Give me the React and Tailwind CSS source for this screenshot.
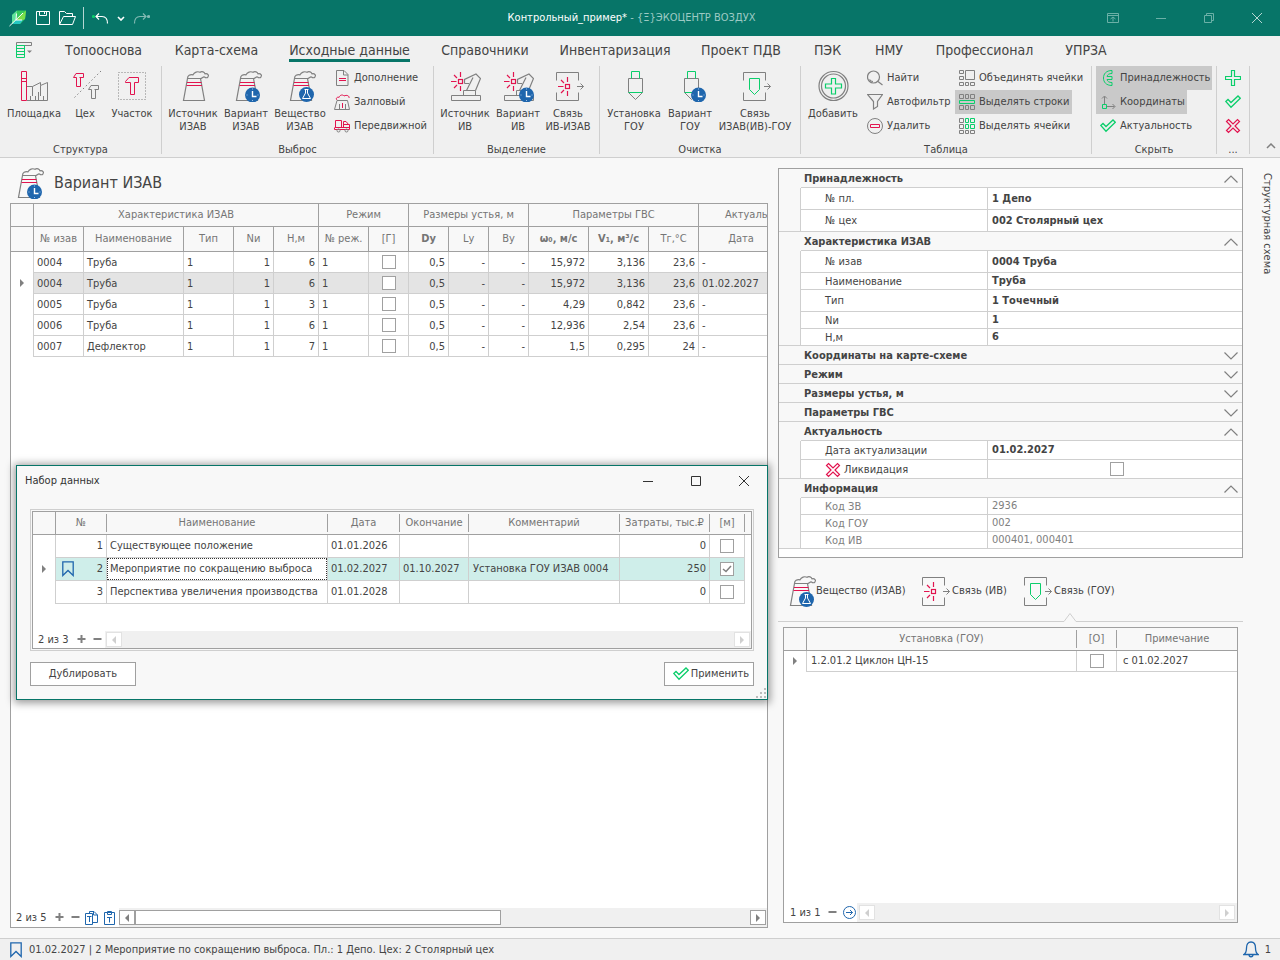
import { useState } from "react";

const GREY = "#808080";
const RED = "#e2144f";
const GREEN = "#0bce6b";
const BLUE = "#1f66ad";

/* ---------- icons ---------- */

const Svg = ({ w = 32, h = 32, children, className = "" }) => (
	<svg
		width={w}
		height={h}
		viewBox={`0 0 ${w} ${h}`}
		fill="none"
		stroke={GREY}
		className={`shrink-0 ${className}`}
		aria-hidden="true"
	>
		{children}
	</svg>
);

const Stack = () => (
	<>
		<path d="M10.5 8.500L6.500 30.500H27.500L23.500 8.500Z" strokeWidth="1.200" />
		<path
			d="M10.5 8.500C10.5 5.500 13 4.300 16 4.800C17.200 2.200 20.500 1 23 2.300C25 .8 27.500 2 28 3.800C31 3.300 32 5.200 31 6.800C30 8.300 28.500 7.800 27.500 7C26 6.500 25 8.500 23.500 8.500"
			strokeWidth="1.200"
		/>
		<path d="M10 12.500H24.500M9.500 15.500H25" stroke={RED} />
	</>
);

const ClockBadge = ({ x = 22.5, y = 25 }) => (
	<g>
		<circle cx={x} cy={y} r="7.500" fill={BLUE} stroke="none" />
		<path d={`M${x} ${y - 4}V${y + 1.5}H${x + 4}`} stroke="#fff" strokeWidth="1.400" />
		<path
			d={`M${x - 6} ${y}h1M${x + 5} ${y}h1M${x} ${y - 6.5}v1M${x} ${y + 5}v1`}
			stroke="#9dc3e8"
		/>
	</g>
);

const StackIcon = () => (
	<Svg>
		<Stack />
	</Svg>
);

const StackClockIcon = () => (
	<Svg>
		<Stack />
		<ClockBadge />
	</Svg>
);

const StackFlaskIcon = () => (
	<Svg>
		<Stack />
		<circle cx="22.5" cy="24.500" r="7.500" fill={BLUE} stroke="none" />
		<path d="M20.500 19.500H24.500M21.500 19.500V23L18.500 28.500H26.500L23.500 23V19.500" stroke="#fff" />
	</Svg>
);

const PlantIcon = () => (
	<Svg>
		<path d="M9 16.500H14.500L22.500 12.500V15.500L29.500 12.500V30.500H9M14.500 16.500V26M22.500 15.500V26M12.500 26V30M17.500 26V30M20.500 22V30M25.500 26V30" />
		<path d="M3.500 1.500H8.500V30.500H3.500ZM3.500 8.500H8.500M3.500 11.500H8.500" stroke={RED} />
	</Svg>
);

const HAMMER = "M.5 4.500L3 .5H10.500V4.500H6.500M.5 4.500H3.500V13.500H7.500V4.500";

const WorkshopIcon = () => (
	<Svg>
		<path d="M5.500 27.500L32 1" strokeDasharray="1.500 2.500" />
		<path d={HAMMER} stroke={RED} transform="translate(4 3)" />
		<path d={HAMMER} transform="translate(19 15)" />
	</Svg>
);

const SectorIcon = () => (
	<Svg>
		<rect x="2.500" y="2.500" width="27" height="27" strokeDasharray="1 2" />
		<path d="M9.500 11.500L13 7.500H22.500V12.500H18.500V24.500H14.500V12.500H9.500Z" stroke={RED} />
	</Svg>
);

const Burst = ({ x, y }) => (
	<g stroke={RED} strokeWidth="1.200" transform={`translate(${x} ${y})`}>
		<rect x="-2" y="-2" width="4" height="4" />
		<path d="M0-9.500V-4.500M0 4.500V9.500M-9.500 0H-4M-6.500-6.500L-3.500-3.500M-6.500 6.500L-3.500 3.500" />
	</g>
);

const EmitterIcon = ({ clock }) => (
	<Svg>
		<path d="M2.500 25.500H31.500V30.500H2.500ZM14.500 25.500V20.500H26.500V25.500" />
		<path
			d="M15.500 13.500V9.500L27 4L31.500 8.500L26.500 20.500M24 7.500L17.500 20.500M15.500 13.500H20"
			strokeWidth="1.200"
		/>
		<Burst x={11.5} y={11.5} />
		{clock && <ClockBadge x={24.5} />}
	</Svg>
);

const Brackets = () => (
	<path d="M4.500 10.500V2.500H26.500V10.500M4.500 22.500V30.500H26.500V22.500M25 16.500H31.500M28.500 13.500L31.500 16.500L28.500 19.500" />
);

const LinkBurstIcon = () => (
	<Svg>
		<Brackets />
		<Burst x={15.5} y={16.5} />
	</Svg>
);

const LinkFilterIcon = () => (
	<Svg>
		<Brackets />
		<path d="M10.500 8.500H20.500V19.500L15.500 24.500L10.500 19.500Z" stroke={GREEN} />
	</Svg>
);

const FilterUnitIcon = ({ clock }) => (
	<Svg>
		<path d="M10.500 22.500V8.500H24.500V22.500L17.500 29.500Z" />
		<path d="M13.500 8.500V1.500H21.500V8.500M10.500 22.500H24.500" stroke={GREEN} />
		{clock && <ClockBadge x={24.5} />}
	</Svg>
);

const AddIcon = () => (
	<Svg>
		<circle cx="16.500" cy="16" r="14.500" strokeWidth="1.200" />
		<circle cx="16.500" cy="16" r="12" strokeWidth="1.200" />
		<path d="M14.500 8.500h4v5.500h6v4h-6v6h-4v-6h-6v-4h6z" stroke={GREEN} strokeWidth="1.200" />
	</Svg>
);

const DocIcon = () => (
	<Svg w={16} h={16}>
		<path d="M2.500 .5H10L14 4.500V15.500H2.500ZM9.500 .5V5H14" />
		<path d="M5 8.500H12M5 10.500H12" stroke={RED} />
	</Svg>
);

const VolleyIcon = () => (
	<Svg w={16} h={16}>
		<path d="M.5 15.500H15.500L13.500 6.500H3L.5 15.500M5.500 10V15M11.500 10V15" />
		<path d="M3 6C1 4 4 2.500 5 3.500C6 .5 9 .5 10 2C13 .5 15.500 2 15 4M8.500 9V14" stroke={RED} />
	</Svg>
);

const TruckIcon = () => (
	<Svg w={16} h={16}>
		<path d="M.5 9.500V11.500H15.500V9M1.500 2.500H7.500V9.500H1.500ZM9.500 9.500V3.500H12L15 7M10 6.500H15.500V9.500H1" stroke={RED} />
		<circle cx="4.500" cy="12.500" r="1.500" />
		<circle cx="12.500" cy="12.500" r="1.500" />
	</Svg>
);

const FindIcon = () => (
	<Svg w={16} h={16}>
		<circle cx="6.500" cy="7" r="6" strokeWidth="1.200" />
		<path d="M11 11.500L15.500 15M2.500 9.500C3 11 4.500 11.500 6 11.500" strokeWidth="1.200" />
	</Svg>
);

const FunnelIcon = () => (
	<Svg w={16} h={16}>
		<path d="M.5 .5H15.500L10.500 7.500V12.500L6.500 15V7.500Z" strokeWidth="1.200" />
	</Svg>
);

const DeleteIcon = () => (
	<Svg w={16} h={16}>
		<circle cx="8" cy="8" r="7.500" />
		<path d="M3.500 6.500H12.500V9.500H3.500Z" stroke={RED} />
	</Svg>
);

const MergeCellsIcon = () => (
	<Svg w={16} h={16}>
		<path d="M.5 .5h4v3h-4zM.5 6.500h4v3h-4zM.5 12.500h4v3h-4zM6.500 12.500h3v3h-3zM11.500 12.500h4v3h-4zM6.500 .5h9v9h-9z" />
	</Svg>
);

const RowCellsIcon = () => (
	<Svg w={16} h={16}>
		<path d="M.5 .5h4v4h-4zM6.500 .5h3v4h-3zM11.500 .5h4v4h-4zM.5 11.500h4v4h-4zM6.500 11.500h3v4h-3zM11.500 11.500h4v4h-4z" />
		<path d="M.5 6.500h15v3h-15z" stroke={GREEN} />
	</Svg>
);

const CellsIcon = () => (
	<Svg w={16} h={16}>
		<path d="M.5 .5h4v4h-4zM.5 6.500h4v4h-4zM.5 12.500h4v3h-4zM6.500 12.500h3v3h-3zM11.500 12.500h4v3h-4z" />
		<path d="M6.500 .5h3v4h-3zM11.500 .5h4v4h-4zM6.500 6.500h3v4h-3zM11.500 6.500h4v4h-4z" stroke={GREEN} />
	</Svg>
);

const BelongIcon = () => (
	<Svg w={16} h={16}>
		<path
			d="M12 .5C6 .5 3.500 4 3.500 8S6 15.500 12 15.500V12.500C9 12.500 7.500 11.500 7 9.500H12V6.500H7C7.500 4.500 9 3.500 12 3.500Z"
			stroke={GREEN}
		/>
	</Svg>
);

const AxesIcon = () => (
	<Svg w={16} h={16}>
		<path d="M4.500 10V2.500M2 4.500L4.500 2L7 4.500M7 12.500H14.500M12.500 10L15 12.500L12.500 15" />
		<path d="M2.500 10.500h4v4h-4z" stroke={GREEN} />
	</Svg>
);

const CheckIcon = () => (
	<Svg w={16} h={16}>
		<path d="M.8 7.500L3 5.500L6 8.500L13 2L15.300 4.200L6 13.200Z" stroke={GREEN} strokeWidth="1.300" />
	</Svg>
);

const PlusIcon = () => (
	<Svg w={16} h={16}>
		<path d="M6.500 .5h3v6h6v3h-6v6h-3v-6h-6v-3h6z" stroke={GREEN} strokeWidth="1.200" />
	</Svg>
);

const CrossIcon = () => (
	<Svg w={16} h={16}>
		<path
			d="M3.500 1.500L8 6L12.500 1.500L14.500 3.500L10 8L14.500 12.500L12.500 14.500L8 10L3.500 14.500L1.500 12.500L6 8L1.500 3.500Z"
			stroke={RED}
			strokeWidth="1.200"
		/>
	</Svg>
);

const BookmarkIcon = () => (
	<Svg w={12} h={16}>
		<path d="M.8 .8H11.200V14.500L6 9.500L.8 14.500Z" stroke={BLUE} strokeWidth="1.300" />
	</Svg>
);

const Chevron = ({ open }) => (
	<Svg w={14} h={8}>
		<path d={open ? "M.5 7.500L7 1L13.500 7.500" : "M.5 .5L7 7L13.500 .5"} strokeWidth="1.200" />
	</Svg>
);

const Marker = () => (
	<svg width="4" height="10" viewBox="0 0 4 10" fill={GREY} className="mx-auto" aria-hidden="true">
		<path d="M0 0L4 4L0 8Z" />
	</svg>
);

/* ---------- small controls ---------- */

const Checkbox = ({ label, defaultChecked = false }) => {
	const [checked, setChecked] = useState(defaultChecked);
	return (
		<label className="mx-auto grid w-[14px] place-items-center">
			<input
				type="checkbox"
				aria-label={label}
				checked={checked}
				onChange={() => setChecked(!checked)}
				className="col-start-1 row-start-1 h-[14px] w-[14px] appearance-none border border-[#a0a0a0] bg-white"
			/>
			{checked && (
				<svg
					width="10"
					height="8"
					viewBox="0 0 10 8"
					fill="none"
					stroke={GREY}
					strokeWidth="1.500"
					className="col-start-1 row-start-1"
				>
					<path d="M1 4L4 6.500L9 1" />
				</svg>
			)}
		</label>
	);
};

const ScrollArrow = ({ left, active }) => (
	<button
		type="button"
		aria-label={left ? "Влево" : "Вправо"}
		className={`grid h-[15px] w-4 shrink-0 place-items-center border bg-white ${
			active ? "border-[#a0a0a0]" : "border-[#e2e2e2]"
		}`}
	>
		<svg width="4" height="8" viewBox="0 0 4 8" fill={active ? GREY : "#cfcfcf"}>
			<path d={left ? "M4 0L0 4L4 8Z" : "M0 0L4 4L0 8Z"} />
		</svg>
	</button>
);

const NavButton = ({ label, plus }) => (
	<button type="button" aria-label={label} className="grid h-4 w-4 shrink-0 place-items-center">
		<svg width="9" height="9" viewBox="0 0 9 9" fill="none" stroke={GREY} strokeWidth="2">
			<path d={plus ? "M.5 4H8.500M4.500 0V8" : "M.5 4H8.500"} />
		</svg>
	</button>
);

const BigButton = ({ icon, lines, className }) => (
	<button type="button" className={`flex h-[68px] flex-col items-center whitespace-nowrap ${className}`}>
		{icon}
		<span className="mt-[5px] flex flex-col leading-[13px]">
			{lines.map((line) => (
				<span key={line}>{line}</span>
			))}
		</span>
	</button>
);

const SmallButton = ({ icon, text, pressed }) => (
	<button
		type="button"
		className={`flex h-6 items-center gap-1 self-start whitespace-nowrap pr-[2px] pl-1 ${
			pressed ? "bg-[#c9c9c9]" : ""
		}`}
	>
		{icon}
		<span>{text}</span>
	</button>
);

const RibbonGroup = ({ title, className, children }) => (
	<section className={`flex h-[88px] shrink-0 flex-col border-r border-[#cfcfcf] ${className}`}>
		<div className="flex h-[77px] shrink-0">{children}</div>
		<h2 className="text-center leading-[14px]">{title}</h2>
	</section>
);

/* ---------- title bar and ribbon ---------- */

const TitleBar = () => (
	<header className="flex h-9 items-center bg-[#077568] text-white">
		<div className="flex flex-1 items-center">
			<svg width="18" height="18" viewBox="0 0 18 18" className="ml-[9px]" aria-hidden="true">
				<path d="M3 6L8 1.500H17L16 10L11 15H3Z" fill="#35c95d" />
				<path d="M3 6L8 1.500L7 11L3 15Z" fill="#5fe39a" />
				<path d="M17 1.500L7 11H14L16 10Z" fill="#7be04a" />
				<path d="M3 15L7 11H14L11 15Z" fill="#25c7c0" />
				<path d="M.5 17L14 4M7.500 4.500L7 11M7 11H13" stroke="#fff" fill="none" />
			</svg>
			<button type="button" aria-label="Сохранить" className="ml-2">
				<svg width="16" height="16" viewBox="0 0 16 16" fill="none" stroke="#fff">
					<path d="M1.500 1.500H14.500V14.500H1.500ZM4.500 1.500V5.500H11.500V1.500M9.500 2V4" />
				</svg>
			</button>
			<button type="button" aria-label="Открыть" className="ml-2">
				<svg width="17" height="16" viewBox="0 0 17 16" fill="none" stroke="#fff">
					<path d="M.5 14.500V1.500H5.500L7.500 3.500H13.500V6.500M.5 14.500L4.500 6.500H16.500L13.500 14.500Z" />
				</svg>
			</button>
			<span className="ml-[7px] h-[22px] w-px bg-[#b5d6d2]" />
			<button type="button" aria-label="Отменить" className="ml-2">
				<svg width="17" height="14" viewBox="0 0 17 14" fill="none" stroke="#fff" strokeWidth="1.200">
					<path d="M4 5.500H10C13.500 5.500 15.500 8 15.500 12.500M7 2.500L4 5.500L7 8.500" />
					<circle cx="1.500" cy="5.500" r="1" fill={GREEN} stroke={GREEN} />
				</svg>
			</button>
			<button type="button" aria-label="Список действий" className="ml-2">
				<svg width="8" height="5" viewBox="0 0 8 5" fill="none" stroke="#fff" strokeWidth="1.600">
					<path d="M1 1L4 4L7 1" />
				</svg>
			</button>
			<button type="button" aria-label="Вернуть" className="ml-2">
				<svg width="17" height="14" viewBox="0 0 17 14" fill="none" stroke="#83bab3" strokeWidth="1.200">
					<path d="M13 5.500H7C3.500 5.500 1.500 8 1.500 12.500M10 2.500L13 5.500L10 8.500" />
					<circle cx="15.500" cy="5.500" r="1" fill="#83bab3" />
				</svg>
			</button>
		</div>
		<h1 className="whitespace-nowrap">
			Контрольный_пример* <span className="text-[#9ccac4]">- {"{Ξ}"}ЭКОЦЕНТР ВОЗДУХ</span>
		</h1>
		<div className="flex flex-1 items-center justify-end gap-9 pr-[17px] text-[#6bb0a7]">
			<button type="button" aria-label="Лента">
				<svg width="12" height="12" viewBox="0 0 12 12" fill="none" stroke="currentColor">
					<path d="M.5 1.500H11.500V10.500H.5ZM.5 3.500H11.500M6 9.500V5M3.500 7L6 5L8.500 7" />
				</svg>
			</button>
			<button type="button" aria-label="Свернуть">
				<svg width="12" height="12" viewBox="0 0 12 12" stroke="currentColor">
					<path d="M1 6.500H11" />
				</svg>
			</button>
			<button type="button" aria-label="Восстановить">
				<svg width="12" height="12" viewBox="0 0 12 12" fill="none" stroke="currentColor">
					<path d="M1.500 3.500H8.500V10.500H1.500ZM3.500 3.500V1.500H10.500V8.500H8.500" />
				</svg>
			</button>
			<button type="button" aria-label="Закрыть" className="text-[#b5d6d2]">
				<svg width="12" height="12" viewBox="0 0 12 12" stroke="currentColor">
					<path d="M1 1L11 11M11 1L1 11" />
				</svg>
			</button>
		</div>
	</header>
);

const tabs = [
	{ title: "Топооснова", width: "w-[111px]" },
	{ title: "Карта-схема", width: "w-[115px]" },
	{ title: "Исходные данные", width: "w-[151px]", active: true },
	{ title: "Справочники", width: "w-[120px]" },
	{ title: "Инвентаризация", width: "w-[140px]" },
	{ title: "Проект ПДВ", width: "w-[112px]" },
	{ title: "ПЭК", width: "w-[61px]" },
	{ title: "НМУ", width: "w-[62px]" },
	{ title: "Профессионал", width: "w-[129px]" },
	{ title: "УПРЗА", width: "w-[74px]" },
];

const RibbonTabs = () => (
	<nav className="flex h-[30px] items-start text-sm">
		<button type="button" aria-label="Меню" className="flex w-12 justify-center pt-[6px]">
			<Svg w={16} h={16}>
				<path d="M.5 .5H15.500V3.500H.5Z" />
				<path d="M11 8.500H16L13.500 11Z" fill={GREY} stroke="none" />
				<path d="M.5 3.500H8.500V15.500H.5ZM.5 6.500H8.500M.5 9.500H8.500M.5 12.500H8.500" stroke={GREEN} />
			</Svg>
		</button>
		{tabs.map((tab) => (
			<button
				key={tab.title}
				type="button"
				className={`flex shrink-0 justify-center whitespace-nowrap pt-[5px] ${tab.width}`}
			>
				<span
					className={`border-b-3 leading-[18px] ${tab.active ? "border-[#077568]" : "border-transparent"}`}
				>
					{tab.title}
				</span>
			</button>
		))}
	</nav>
);

const Ribbon = () => (
	<div className="border-b border-[#cfcfcf] bg-[#f0f0f0]">
		<RibbonTabs />
		<div className="flex h-[91px]">
			<RibbonGroup title="Структура" className="w-[162px]">
				<div className="flex pt-1 pl-[7px]">
					<BigButton icon={<PlantIcon />} lines={["Площадка"]} className="w-[54px]" />
					<BigButton icon={<WorkshopIcon />} lines={["Цех"]} className="w-12" />
					<BigButton icon={<SectorIcon />} lines={["Участок"]} className="w-[46px]" />
				</div>
			</RibbonGroup>
			<RibbonGroup title="Выброс" className="w-[272px]">
				<div className="flex pt-1 pl-1">
					<BigButton icon={<StackIcon />} lines={["Источник", "ИЗАВ"]} className="w-[54px]" />
					<BigButton icon={<StackClockIcon />} lines={["Вариант", "ИЗАВ"]} className="w-[52px]" />
					<BigButton icon={<StackFlaskIcon />} lines={["Вещество", "ИЗАВ"]} className="w-[56px]" />
				</div>
				<div className="ml-[2px] flex flex-col">
					<SmallButton icon={<DocIcon />} text="Дополнение" />
					<SmallButton icon={<VolleyIcon />} text="Залповый" />
					<SmallButton icon={<TruckIcon />} text="Передвижной" />
				</div>
			</RibbonGroup>
			<RibbonGroup title="Выделение" className="w-[166px]">
				<div className="flex pt-1 pl-1">
					<BigButton icon={<EmitterIcon />} lines={["Источник", "ИВ"]} className="w-[54px]" />
					<BigButton icon={<EmitterIcon clock />} lines={["Вариант", "ИВ"]} className="w-[52px]" />
					<BigButton icon={<LinkBurstIcon />} lines={["Связь", "ИВ-ИЗАВ"]} className="w-12" />
				</div>
			</RibbonGroup>
			<RibbonGroup title="Очистка" className="w-[201px]">
				<div className="flex pt-1 pl-[6px]">
					<BigButton icon={<FilterUnitIcon />} lines={["Установка", "ГОУ"]} className="w-[56px]" />
					<BigButton icon={<FilterUnitIcon clock />} lines={["Вариант", "ГОУ"]} className="w-[56px]" />
					<BigButton icon={<LinkFilterIcon />} lines={["Связь", "ИЗАВ(ИВ)-ГОУ"]} className="w-[74px]" />
				</div>
			</RibbonGroup>
			<RibbonGroup title="Таблица" className="w-[291px]">
				<div className="pt-1 pl-[5px]">
					<BigButton icon={<AddIcon />} lines={["Добавить"]} className="w-[54px]" />
				</div>
				<div className="ml-[3px] flex w-[92px] flex-col">
					<SmallButton icon={<FindIcon />} text="Найти" />
					<SmallButton icon={<FunnelIcon />} text="Автофильтр" />
					<SmallButton icon={<DeleteIcon />} text="Удалить" />
				</div>
				<div className="flex flex-col">
					<SmallButton icon={<MergeCellsIcon />} text="Объединять ячейки" />
					<SmallButton icon={<RowCellsIcon />} text="Выделять строки" pressed />
					<SmallButton icon={<CellsIcon />} text="Выделять ячейки" />
				</div>
			</RibbonGroup>
			<RibbonGroup title="Скрыть" className="w-[125px]">
				<div className="flex flex-col pl-1">
					<SmallButton icon={<BelongIcon />} text="Принадлежность" pressed />
					<SmallButton icon={<AxesIcon />} text="Координаты" pressed />
					<SmallButton icon={<CheckIcon />} text="Актуальность" />
				</div>
			</RibbonGroup>
			<RibbonGroup title="..." className="w-[33px]">
				<div className="flex w-full flex-col items-center">
					<button type="button" aria-label="Принять все" className="grid h-6 place-items-center">
						<PlusIcon />
					</button>
					<button type="button" aria-label="Отметить" className="grid h-6 place-items-center">
						<CheckIcon />
					</button>
					<button type="button" aria-label="Снять" className="grid h-6 place-items-center">
						<CrossIcon />
					</button>
				</div>
			</RibbonGroup>
			<button type="button" aria-label="Свернуть ленту" className="mr-1 mb-2 ml-auto self-end">
				<svg width="10" height="6" viewBox="0 0 10 6" fill="none" stroke={GREY} strokeWidth="1.500">
					<path d="M1 5L5 1L9 5" />
				</svg>
			</button>
		</div>
	</div>
);

/* ---------- sources table ---------- */

const groups = [
	{ title: "Характеристика ИЗАВ", span: 5 },
	{ title: "Режим", span: 2 },
	{ title: "Размеры устья, м", span: 3 },
	{ title: "Параметры ГВС", span: 3 },
	{ title: "Актуальность", span: 2 },
];

const columns = [
	{ title: "№ изав", width: "w-[50px]", align: "text-left" },
	{ title: "Наименование", width: "w-[100px]", align: "text-left" },
	{ title: "Тип", width: "w-[50px]", align: "text-left" },
	{ title: "Nи", width: "w-[40px]", align: "text-right" },
	{ title: "Н,м", width: "w-[45px]", align: "text-right" },
	{ title: "№ реж.", width: "w-[50px]", align: "text-left" },
	{ title: "[Г]", width: "w-[40px]", check: true },
	{ title: "Dу", width: "w-[40px]", align: "text-right", bold: true },
	{ title: "Lу", width: "w-[40px]", align: "text-right" },
	{ title: "Bу", width: "w-[40px]", align: "text-right" },
	{ title: "ω₀, м/с", width: "w-[60px]", align: "text-right", bold: true },
	{ title: "V₁, м³/с", width: "w-[60px]", align: "text-right", bold: true },
	{ title: "Тг,°С", width: "w-[50px]", align: "text-right" },
	{ title: "Дата", width: "w-[85px]", align: "text-left" },
	{ title: "", width: "w-[40px]", align: "text-left" },
];

const sources = [
	["0004", "Труба", "1", "1", "6", "1", "", "0,5", "-", "-", "15,972", "3,136", "23,6", "-", ""],
	["0004", "Труба", "1", "1", "6", "1", "", "0,5", "-", "-", "15,972", "3,136", "23,6", "01.02.2027", ""],
	["0005", "Труба", "1", "1", "3", "1", "", "0,5", "-", "-", "4,29", "0,842", "23,6", "-", ""],
	["0006", "Труба", "1", "1", "6", "1", "", "0,5", "-", "-", "12,936", "2,54", "23,6", "-", ""],
	["0007", "Дефлектор", "1", "1", "7", "1", "", "0,5", "-", "-", "1,5", "0,295", "24", "-", ""],
];

const SourcesTable = ({ selected }) => (
	<table className="w-[813px] table-fixed border-separate border-spacing-0">
		<colgroup>
			<col className="w-[23px]" />
			{columns.map((col) => (
				<col key={col.title} className={col.width} />
			))}
		</colgroup>
		<thead className="bg-[#f8f8f8] text-[#757575]">
			<tr className="h-[23px]">
				<th className="border-r border-b border-[#a0a0a0] p-0" />
				{groups.map((group) => (
					<th
						key={group.title}
						colSpan={group.span}
						className="border-r border-b border-[#a0a0a0] p-0 font-normal"
					>
						{group.title}
					</th>
				))}
			</tr>
			<tr className="h-[25px]">
				<th className="border-r border-b border-[#a0a0a0] p-0" />
				{columns.map((col) => (
					<th
						key={col.title}
						className={`border-r border-b border-[#a0a0a0] p-0 whitespace-nowrap ${
							col.bold ? "font-bold" : "font-normal"
						}`}
					>
						{col.title}
					</th>
				))}
			</tr>
		</thead>
		<tbody>
			{sources.map((row, index) => (
				<tr key={index} className="h-[21px]">
					<td className="border-r border-[#cfcfcf] p-0">{index === selected && <Marker />}</td>
					{columns.map((col, i) => (
						<td
							key={col.title}
							className={`border-r border-b border-[#cfcfcf] px-[3px] whitespace-nowrap ${
								col.check ? "py-0" : "pt-px pb-0"
							} ${col.align ?? ""} ${index === selected ? "bg-[#e4e4e4]" : ""}`}
						>
							{col.check ? <Checkbox label={`Режим ${row[0]}`} /> : row[i]}
						</td>
					))}
				</tr>
			))}
		</tbody>
	</table>
);

/* ---------- dialog ---------- */

const scenarios = [
	{ no: 1, name: "Существующее положение", start: "01.01.2026", end: "", note: "", cost: 0 },
	{
		no: 2,
		name: "Мероприятие по сокращению выброса",
		start: "01.02.2027",
		end: "01.10.2027",
		note: "Установка ГОУ ИЗАВ 0004",
		cost: 250,
		current: true,
	},
	{ no: 3, name: "Перспектива увеличения производства", start: "01.01.2028", end: "", note: "", cost: 0 },
];

const HeadCell = ({ children }) => (
	<th className="border-b border-[#a0a0a0] p-0 font-normal whitespace-nowrap">
		<div className="border-r border-[#a0a0a0] leading-[18px]">{children}</div>
	</th>
);

const ScenarioTable = () => (
	<table className="w-full table-fixed border-separate border-spacing-0">
		<colgroup>
			<col className="w-[23px]" />
			<col className="w-[51px]" />
			<col className="w-[221px]" />
			<col className="w-[72px]" />
			<col className="w-[69px]" />
			<col className="w-[151px]" />
			<col className="w-[90px]" />
			<col className="w-[35px]" />
			<col />
		</colgroup>
		<thead className="bg-[#f8f8f8] text-[#757575]">
			<tr className="h-[23px]">
				<th className="border-r border-b border-[#a0a0a0] p-0" />
				<HeadCell>№</HeadCell>
				<HeadCell>Наименование</HeadCell>
				<HeadCell>Дата</HeadCell>
				<HeadCell>Окончание</HeadCell>
				<HeadCell>Комментарий</HeadCell>
				<HeadCell>Затраты, тыс.₽</HeadCell>
				<HeadCell>[м]</HeadCell>
				<th className="border-b border-[#a0a0a0] p-0" />
			</tr>
		</thead>
		<tbody className="[&_td]:border-[#cfcfcf] [&_td]:py-0 [&_td]:whitespace-nowrap">
			{scenarios.map((row) => (
				<tr key={row.no} className="h-[23px]">
					<td className="border-r p-0">{row.current && <Marker />}</td>
					<td className={`border-r border-b px-[3px] ${row.current ? "bg-[#cfeeea]" : ""}`}>
						<div className="flex items-center justify-between pl-[3px]">
							{row.current ? <BookmarkIcon /> : <span />}
							{row.no}
						</div>
					</td>
					<td className={`border-r border-b p-0 ${row.current ? "bg-white" : ""}`}>
						<div
							className={`border border-dotted pl-[2px] leading-5 ${
								row.current ? "border-[#333]" : "border-transparent"
							}`}
						>
							{row.name}
						</div>
					</td>
					<td className={`border-r border-b px-[3px] ${row.current ? "bg-[#cfeeea]" : ""}`}>{row.start}</td>
					<td className={`border-r border-b px-[3px] ${row.current ? "bg-[#cfeeea]" : ""}`}>{row.end}</td>
					<td className={`border-r border-b px-1 ${row.current ? "bg-[#cfeeea]" : ""}`}>{row.note}</td>
					<td className={`border-r border-b px-[3px] text-right ${row.current ? "bg-[#cfeeea]" : ""}`}>
						{row.cost}
					</td>
					<td className={`border-r border-b p-0 ${row.current ? "bg-[#cfeeea]" : ""}`}>
						<Checkbox label={`Мероприятие ${row.no}`} defaultChecked={row.current} />
					</td>
					<td className="p-0" />
				</tr>
			))}
		</tbody>
	</table>
);

const DatasetDialog = () => (
	<div
		role="dialog"
		aria-labelledby="dataset-title"
		className="absolute top-[307px] right-0 left-[6px] border border-[#077568] bg-[#f8f8f8] shadow-[0_1px_8px_2px_rgba(0,0,0,0.4)]"
	>
		<div className="flex h-[30px] items-center justify-between pr-[17px] pl-2 text-[#333]">
			<h3 id="dataset-title">Набор данных</h3>
			<div className="flex gap-9">
				<button type="button" aria-label="Свернуть окно">
					<svg width="12" height="12" viewBox="0 0 12 12" stroke="currentColor">
						<path d="M1 6.500H11" />
					</svg>
				</button>
				<button type="button" aria-label="Развернуть окно">
					<svg width="12" height="12" viewBox="0 0 12 12" fill="none" stroke="currentColor">
						<path d="M1.500 1.500H10.500V10.500H1.500Z" />
					</svg>
				</button>
				<button type="button" aria-label="Закрыть окно">
					<svg width="12" height="12" viewBox="0 0 12 12" stroke="currentColor">
						<path d="M1 1L11 11M11 1L1 11" />
					</svg>
				</button>
			</div>
		</div>
		<div className="mx-[13px] mt-[13px] border border-[#cfcfcf] p-px">
			<div className="flex h-[138px] flex-col border border-[#a0a0a0] bg-white">
				<ScenarioTable />
				<div className="mt-auto flex h-[17px] items-center pl-[5px]">
					<span className="w-[35px]">2 из 3</span>
					<NavButton label="Добавить строку" plus />
					<NavButton label="Удалить строку" />
					<div className="flex h-full flex-1 items-center justify-between bg-[#f0f0f0] px-px">
						<ScrollArrow left />
						<ScrollArrow />
					</div>
				</div>
			</div>
		</div>
		<div className="flex justify-between px-[13px] pt-[11px] pb-[13px]">
			<button type="button" className="h-6 w-[106px] border border-[#a0a0a0] bg-white">
				Дублировать
			</button>
			<button
				type="button"
				className="flex h-6 w-[90px] items-center justify-end gap-[2px] border border-[#a0a0a0] bg-white pr-1"
			>
				<CheckIcon />
				Применить
			</button>
		</div>
		<svg
			width="11"
			height="11"
			viewBox="0 0 11 11"
			fill="#bcbcbc"
			className="absolute right-0 bottom-0"
			aria-hidden="true"
		>
			<path d="M8 0h2v2h-2zM8 4h2v2h-2zM8 8h2v2h-2zM4 4h2v2h-2zM4 8h2v2h-2zM0 8h2v2h-2z" />
		</svg>
	</div>
);

/* ---------- right column ---------- */

const initialSections = [
	{
		title: "Принадлежность",
		open: true,
		rows: [
			{ name: "№ пл.", value: "1 Депо", height: "h-[22px]" },
			{ name: "№ цех", value: "002 Столярный цех", height: "h-[22px]" },
		],
	},
	{
		title: "Характеристика ИЗАВ",
		open: true,
		rows: [
			{ name: "№ изав", value: "0004 Труба", height: "h-[22px]" },
			{ name: "Наименование", value: "Труба", height: "h-[17px]" },
			{ name: "Тип", value: "1 Точечный", height: "h-[22px]" },
			{ name: "Nи", value: "1", height: "h-[17px]" },
			{ name: "Н,м", value: "6", height: "h-[17px]" },
		],
	},
	{ title: "Координаты на карте-схеме", rows: [] },
	{ title: "Режим", rows: [] },
	{ title: "Размеры устья, м", rows: [] },
	{ title: "Параметры ГВС", rows: [] },
	{
		title: "Актуальность",
		open: true,
		rows: [
			{ name: "Дата актуализации", value: "01.02.2027", height: "h-[19px]" },
			{ name: "Ликвидация", check: true, height: "h-[19px]" },
		],
	},
	{
		title: "Информация",
		open: true,
		muted: true,
		rows: [
			{ name: "Код ЗВ", value: "2936", height: "h-[17px]" },
			{ name: "Код ГОУ", value: "002", height: "h-[17px]" },
			{ name: "Код ИВ", value: "000401, 000401", height: "h-[17px]" },
		],
	},
];

const PropertyGrid = () => {
	const [sections, setSections] = useState(initialSections);

	const toggle = (title) =>
		setSections(sections.map((s) => (s.title === title ? { ...s, open: !s.open } : s)));

	return (
		<div className="border border-[#a0a0a0] bg-white pb-2">
			<table className="w-full table-fixed border-separate border-spacing-0 leading-[14px] [&_td]:border-[#cfcfcf] [&_th]:border-[#cfcfcf]">
				<colgroup>
					<col className="w-[22px]" />
					<col className="w-[187px]" />
					<col />
				</colgroup>
				{sections.map((section) => (
					<tbody key={section.title}>
						<tr className="h-[19px]">
							<td className={`bg-[#f8f8f8] p-0 ${section.open && section.rows.length ? "" : "border-b"}`} />
							<th colSpan={2} className="border-b bg-[#f8f8f8] p-0">
								<button
									type="button"
									onClick={() => toggle(section.title)}
									className="flex w-full items-center justify-between pt-px pr-1 pl-[3px] font-bold"
								>
									{section.title}
									<Chevron open={section.open} />
								</button>
							</th>
						</tr>
						{section.open &&
							section.rows.map((row, i) => (
								<tr key={row.name} className={`${row.height} ${section.muted ? "text-[#808080]" : ""}`}>
									<td
										className={`border-r bg-[#f8f8f8] p-0 ${
											i === section.rows.length - 1 ? "border-b" : ""
										}`}
									/>
									<th className="border-r border-b p-0 pt-px pl-6 text-left font-normal">
										{row.check ? (
											<span className="flex items-center gap-[3px]">
												<CrossIcon />
												{row.name}
											</span>
										) : (
											row.name
										)}
									</th>
									<td className={`border-b p-0 pl-1 ${section.muted ? "" : "font-bold"}`}>
										{row.check ? <Checkbox label={row.name} /> : row.value}
									</td>
								</tr>
							))}
					</tbody>
				))}
			</table>
		</div>
	);
};

const DetailTabs = () => (
	<div className="mt-[17px]">
		<nav className="flex h-8 items-center pl-[9px]">
			<button type="button" className="flex w-[131px] items-center whitespace-nowrap">
				<span className="-ml-[3px]">
					<StackFlaskIcon />
				</span>
				Вещество (ИЗАВ)
			</button>
			<button type="button" className="flex w-[102px] items-center gap-[2px] whitespace-nowrap">
				<LinkBurstIcon />
				Связь (ИВ)
			</button>
			<button type="button" className="flex items-center gap-[2px] whitespace-nowrap">
				<LinkFilterIcon />
				Связь (ГОУ)
			</button>
		</nav>
		<div className="flex h-[15px] items-end">
			<span className="h-px w-[286px] bg-[#cfcfcf]" />
			<svg width="12" height="9" viewBox="0 0 12 9" fill="none" stroke="#cfcfcf" aria-hidden="true">
				<path d="M0 8.500L6 .5L12 8.500" />
			</svg>
			<span className="h-px flex-1 bg-[#cfcfcf]" />
		</div>
	</div>
);

const UnitPanel = () => (
	<div className="mx-[5px] mt-[5px] mb-[15px] flex flex-1 flex-col border border-[#a0a0a0] bg-white">
		<table className="w-full table-fixed border-separate border-spacing-0">
			<colgroup>
				<col className="w-[23px]" />
				<col className="w-[270px]" />
				<col className="w-[40px]" />
				<col />
			</colgroup>
			<thead className="bg-[#f8f8f8] text-[#757575]">
				<tr className="h-[23px]">
					<th className="border-r border-b border-[#a0a0a0] p-0" />
					<HeadCell>Установка (ГОУ)</HeadCell>
					<HeadCell>[О]</HeadCell>
					<th className="border-b border-[#a0a0a0] p-0 font-normal">Примечание</th>
				</tr>
			</thead>
			<tbody>
				<tr className="h-[21px]">
					<td className="border-r border-[#cfcfcf] p-0">
						<Marker />
					</td>
					<td className="border-r border-b border-[#cfcfcf] p-0 pl-1">1.2.01.2 Циклон ЦН-15</td>
					<td className="border-r border-b border-[#cfcfcf] p-0">
						<Checkbox label="Циклон ЦН-15" />
					</td>
					<td className="border-b border-[#cfcfcf] p-0 pl-[6px]">с 01.02.2027</td>
				</tr>
			</tbody>
		</table>
		<div className="mt-auto flex h-[19px] items-center pl-[6px]">
			<span className="w-[34px]">1 из 1</span>
			<NavButton label="Удалить установку" />
			<button type="button" aria-label="Перейти" className="ml-[2px]">
				<Svg w={15} h={15}>
					<g stroke={BLUE}>
						<circle cx="7.500" cy="7.500" r="6" />
						<path d="M4 7.500H10.500M8 5L10.500 7.500L8 10" />
					</g>
				</Svg>
			</button>
			<div className="flex h-full flex-1 items-center justify-between bg-[#f0f0f0] px-[2px]">
				<ScrollArrow left />
				<ScrollArrow />
			</div>
		</div>
	</div>
);

/* ---------- page ---------- */

const App = () => (
	<div className="flex min-h-screen flex-col bg-[#f8f8f8] font-['DejaVu_Sans_Condensed','Noto_Sans',sans-serif] text-[11px] leading-4 text-[#444]">
		<TitleBar />
		<Ribbon />
		<main className="flex flex-1 pl-[10px]">
			<section className="relative flex min-w-0 flex-1 flex-col">
				<div className="flex h-[45px] items-center gap-1 pt-1 pl-[2px]">
					<StackClockIcon />
					<h2 className="pl-[6px] text-base">Вариант ИЗАВ</h2>
				</div>
				<div className="mb-[10px] flex flex-1 flex-col border border-[#a0a0a0] bg-white">
					<div className="overflow-hidden">
						<SourcesTable selected={1} />
					</div>
					<div className="mt-auto flex h-[19px] items-center pl-[5px]">
						<span className="w-[35px]">2 из 5</span>
						<NavButton label="Добавить источник" plus />
						<NavButton label="Удалить источник" />
						<button type="button" aria-label="Копировать" className="ml-px">
							<Svg w={16} h={16}>
								<path
									d="M1.500 3.500H8.500V14.500H1.500ZM3 6.500H7.500M5.500 6.500V12M5.500 3V1.500H10L13.500 5V12.500H9M9.500 1.500V5H13.500"
									stroke={BLUE}
								/>
							</Svg>
						</button>
						<button type="button" aria-label="Вставить" className="ml-[2px]">
							<Svg w={16} h={16}>
								<path
									d="M2.500 2.500H12.500V14.500H2.500ZM5.500 1.500H9.500V4.500H5.500ZM5 7.500H10M7.500 7.500V12.500"
									stroke={BLUE}
								/>
							</Svg>
						</button>
						<div className="ml-px flex h-full flex-1 items-center bg-[#f0f0f0] pr-px">
							<ScrollArrow left active />
							<div className="h-[15px] w-[366px] border border-[#a0a0a0] bg-white" />
							<div className="ml-auto flex">
								<ScrollArrow active />
							</div>
						</div>
					</div>
				</div>
				<DatasetDialog />
			</section>
			<section className="ml-[10px] flex w-[465px] shrink-0 flex-col pt-[10px]">
				<PropertyGrid />
				<DetailTabs />
				<UnitPanel />
			</section>
			<aside className="w-[37px] shrink-0 pt-[15px] pl-4">
				<button type="button" className="[writing-mode:vertical-rl]">
					Структурная схема
				</button>
			</aside>
		</main>
		<footer className="flex h-[22px] items-center border-t border-[#cfcfcf] bg-[#f0f0f0] pr-[9px] pl-[10px]">
			<BookmarkIcon />
			<p className="ml-[7px] flex-1">
				01.02.2027 | 2 Мероприятие по сокращению выброса. Пл.: 1 Депо. Цех: 2 Столярный цех
			</p>
			<button type="button" aria-label="Уведомления" className="mr-[6px]">
				<Svg w={16} h={17}>
					<path
						d="M.8 13.500C3.500 12 3.500 10 3.500 7C3.500 3.500 5 1 8 1S12.500 3.500 12.500 7C12.500 10 12.500 12 15.200 13.500ZM6 13.500C6 16.500 10 16.500 10 13.500"
						stroke={BLUE}
						strokeWidth="1.300"
					/>
				</Svg>
			</button>
			<span>1</span>
		</footer>
	</div>
);

export default App;
